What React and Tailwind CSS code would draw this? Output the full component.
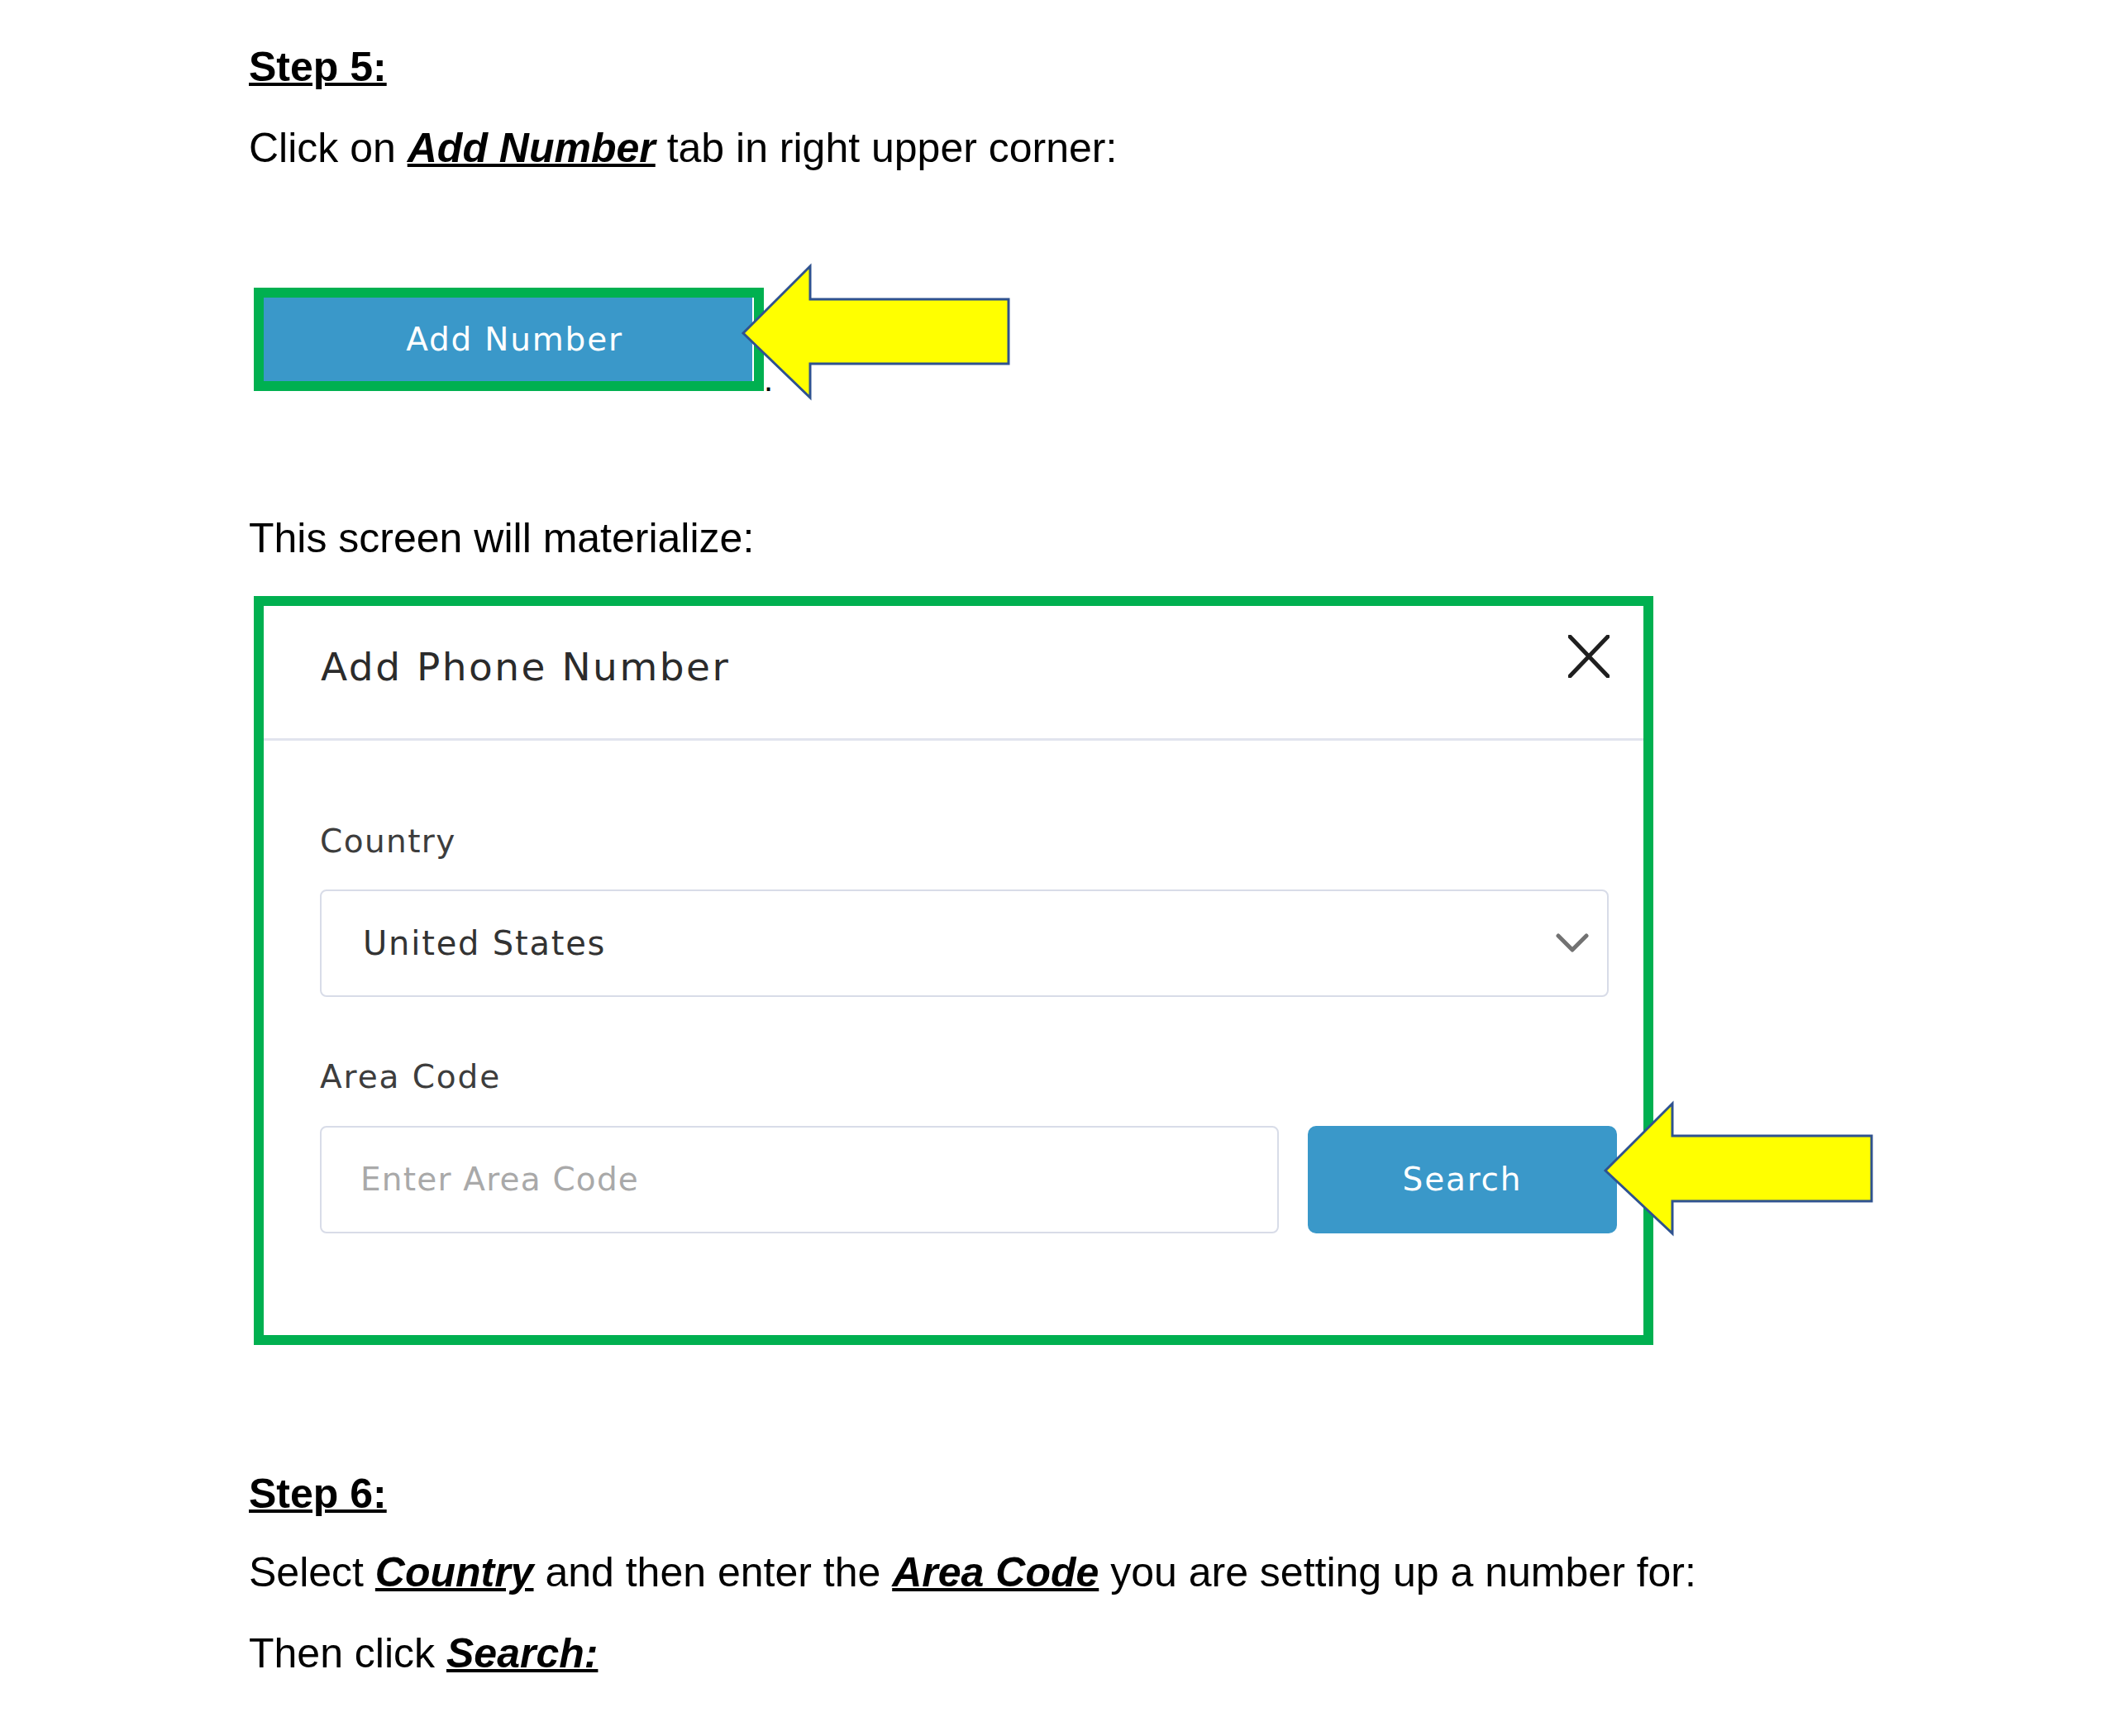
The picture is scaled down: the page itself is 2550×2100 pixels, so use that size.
import React from "react";

const doc = { fontFamily: '"Liberation Sans", Arial, sans-serif' };
const ui = { fontFamily: '"DejaVu Sans", Inter, sans-serif' };

function U({ children, italic }) {
  return (
    <span
      className={
        "font-bold underline decoration-[4px] " + (italic ? "italic" : "")
      }
    >
      {children}
    </span>
  );
}

export default function App() {
  return (
    <div
      className="relative w-[2550px] h-[2100px] bg-white text-black overflow-hidden"
      style={doc}
    >
      <div className="pl-[301px] pt-[51px] text-[50px] leading-[60px]">
        <div>
          <U>Step 5:</U>
        </div>
        <div className="mt-[38px]">
          Click on <U italic>Add Number</U> tab in right upper corner:
        </div>

        {/* Add Number button image */}
        <div className="mt-[139px] ml-[6px]">
          <div className="inline-block overflow-hidden align-baseline w-[617px] h-[125px] border-[12px] border-[#00b050] bg-white pr-[2px]">
            <div
              className="h-full bg-[#3a98c9] flex items-center justify-center pl-[16px] text-white text-[39px] leading-[46px] tracking-[1.8px]"
              style={ui}
            >
              Add Number
            </div>
          </div>
          <span className="text-[40px]">.</span>
        </div>

        <div className="mt-[132px]">This screen will materialize:</div>

        {/* Modal image */}
        <div
          className="mt-[40px] ml-[6px] w-[1693px] h-[906px] border-[12px] border-[#00b050] bg-white"
          style={ui}
        >
          <div className="h-[163px] border-b-[3px] border-[#e1e4ee] flex justify-between items-start pl-[69px] pr-[41px]">
            <div className="pt-[49px] text-[47px] leading-[50px] tracking-[2.5px] text-[#2b2b2b]">
              Add Phone Number
            </div>
            <svg
              width="50"
              height="52"
              viewBox="0 0 50 52"
              className="mt-[35px]"
            >
              <path
                d="M2 2 L48 50 M48 2 L2 50"
                stroke="#1f1f1f"
                strokeWidth="5"
                strokeLinecap="round"
                fill="none"
              />
            </svg>
          </div>

          <div className="pl-[68px]">
            <div className="mt-[100px] text-[39px] leading-[44px] tracking-[1.4px] text-[#3d3d3d]">
              Country
            </div>
            <div className="mt-[36px] w-[1559px] h-[130px] border-2 border-[#d8dce8] rounded-[8px] flex items-center justify-between pl-[50px] pr-[22px]">
              <span className="text-[40px] leading-[46px] tracking-[1.8px] text-[#333333]">
                United States
              </span>
              <svg width="40" height="24" viewBox="0 0 40 24">
                <path
                  d="M3 3 L20 20 L37 3"
                  stroke="#727272"
                  strokeWidth="5"
                  strokeLinecap="round"
                  strokeLinejoin="round"
                  fill="none"
                />
              </svg>
            </div>

            <div className="mt-[75px] text-[39px] leading-[44px] tracking-[1.9px] text-[#3d3d3d]">
              Area Code
            </div>
            <div className="mt-[37px] flex gap-[35px]">
              <div className="w-[1160px] h-[130px] border-2 border-[#d8dce8] rounded-[8px] flex items-center pl-[47px]">
                <span className="text-[39px] leading-[46px] tracking-[1.2px] text-[#a9a9a9]">
                  Enter Area Code
                </span>
              </div>
              <div className="w-[374px] h-[130px] rounded-[10px] bg-[#3a98c9] flex items-center justify-center">
                <span className="text-[39px] leading-[46px] tracking-[1.8px] text-white">
                  Search
                </span>
              </div>
            </div>
          </div>
        </div>

        <div className="mt-[150px]">
          <U>Step 6:</U>
        </div>
        <div className="mt-[35px]">
          Select <U italic>Country</U> and then enter the{" "}
          <U italic>Area Code</U> you are setting up a number for:
        </div>
        <div className="mt-[38px]">
          Then click <U italic>Search:</U>
        </div>
      </div>

      {/* callout arrows */}
      <svg
        className="absolute top-0 left-0 pointer-events-none"
        width="2550"
        height="2100"
        viewBox="0 0 2550 2100"
      >
        <polygon
          points="899,403 980,322 980,362 1220,362 1220,440 980,440 980,481"
          fill="#ffff00"
          stroke="#2f528f"
          strokeWidth="3"
          strokeLinejoin="miter"
        />
        <polygon
          points="1942,1416 2023,1335 2023,1374 2264,1374 2264,1453 2023,1453 2023,1492"
          fill="#ffff00"
          stroke="#2f528f"
          strokeWidth="3"
          strokeLinejoin="miter"
        />
      </svg>
    </div>
  );
}
